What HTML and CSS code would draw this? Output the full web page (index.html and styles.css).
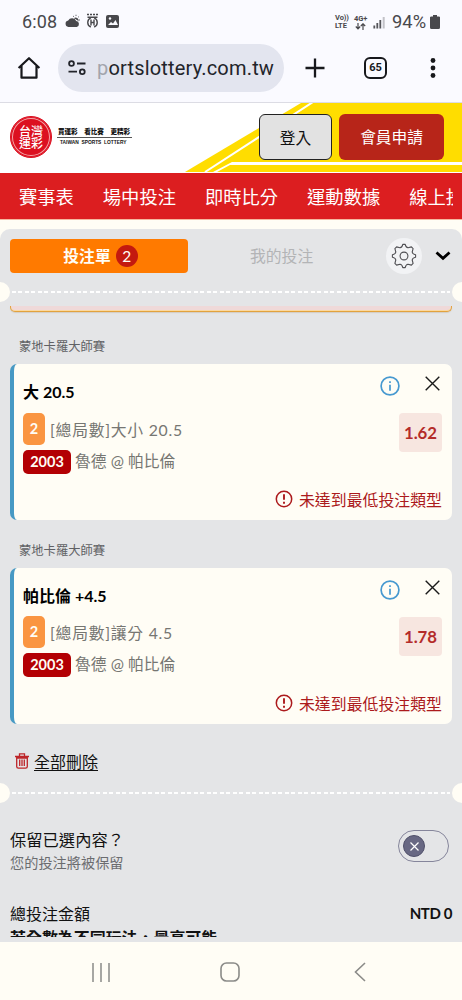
FILE: index.html
```html
<!DOCTYPE html>
<html lang="zh-Hant">
<head>
<meta charset="utf-8">
<title>台灣運彩</title>
<link rel="stylesheet" href="styles.css">
</head>
<body>
<div class="screen">
  <div class="status">
    <span class="time">6:08</span>
    <svg class="st-icons" width="58" height="18" viewBox="0 0 58 18">
      <g fill="#48484c">
        <path d="M3.400 14a3.300 3.300 0 0 1-.2-6.500 4.400 4.400 0 0 1 8 .6 3 3 0 0 1 .5 5.900z"/>
        <path d="M8.800 5.200a3 3 0 0 1 4.700 3.200 4.500 4.500 0 0 0-1.700-1.300 5.200 5.200 0 0 0-3-1.900z"/>
      </g>
      <path d="M8 3l.8.6M11 1.800v1M14 3.500l-.7.600M14.800 7h-.8" stroke="#48484c" fill="none"/>
      <g fill="none" stroke="#48484c" stroke-width="1.400">
        <path d="M22 1.500h11" stroke-dasharray="2 1"/>
        <path d="M25.800 4.800a5 5 0 0 0 0 9.200M29.200 4.800a5 5 0 0 1 0 9.200M26 6.500v6M29 6.500v6M26 9.500h3M22.500 4.300h10"/>
      </g>
      <rect x="41" y="2" width="13" height="13" rx="2" fill="#48484c"/>
      <path d="M43 12l3-3 2 1.500 2.500-3.500 2.500 5z" fill="#fafaff"/><circle cx="45" cy="5.500" r="1.200" fill="#fafaff"/>
    </svg>
    <span class="grow"></span>
    <span class="net">Vo))<br>LTE</span>
    <span class="net net-4g">4G+<svg width="11" height="7" viewBox="0 0 11 7"><path d="M3 0v5.500M.8 3.500L3 5.800l2.200-2.300M8 7V1M5.800 3L8 .8 10.200 3" fill="none" stroke="#48484c" stroke-width="1.200"/></svg></span>
    <svg class="signal" width="13" height="13" viewBox="0 0 13 13"><path d="M1.300 12.500v-3M4.300 12.500V7M7.300 12.500V4" stroke="#55555a" stroke-width="1.800"/><path d="M10.700 12.500V1" stroke="#c2c2c8" stroke-width="2"/></svg>
    <span class="batt-text">94%</span>
    <svg class="batt" width="10" height="14" viewBox="0 0 10 14"><path d="M3 0h4v1.500h1.500A1.300 1.300 0 0 1 10 3v9.500A1.500 1.500 0 0 1 8.500 14h-7A1.500 1.500 0 0 1 0 12.500V3a1.300 1.300 0 0 1 1.300-1.500H3z" fill="#48484c"/></svg>
  </div>
  <div class="browser">
    <svg class="home" width="24" height="24" viewBox="0 0 24 24"><path d="M1.600 12L12 2.200 22.400 12M4.500 10v11.700h15V10" fill="none" stroke="#17181c" stroke-width="2.200" stroke-linejoin="round"/></svg>
    <div class="url">
      <svg width="20" height="18" viewBox="0 0 20 18"><g fill="none" stroke="#22242a" stroke-width="1.800"><circle cx="4.500" cy="4.500" r="2.400"/><path d="M10 4.500h8.500M1.500 12.700H10"/><circle cx="15.300" cy="12.700" r="2.400"/></g></svg>
      <span class="address"><span class="faded">p</span>ortslottery.com.tw</span>
    </div>
    <svg class="plus" width="20" height="20" viewBox="0 0 20 20"><path d="M10 .5v19M.5 10h19" stroke="#17181c" stroke-width="2.300"/></svg>
    <span class="tabs">65</span>
    <svg class="dots" width="6" height="20" viewBox="0 0 6 20"><g fill="#17181c"><circle cx="3" cy="2.500" r="2.400"/><circle cx="3" cy="10" r="2.400"/><circle cx="3" cy="17.500" r="2.400"/></g></svg>
  </div>
  <header class="site">
    <svg class="swoosh" width="277" height="69" viewBox="0 0 277 69"><path d="M0 69L116 0H277V69z" fill="#fd0"/><path d="M20 69L128 -1" stroke="#fff" stroke-width="2"/><path d="M28 69L47 59H277V62H45L32 69z" fill="#fff"/></svg>
    <div class="logo">
      <span class="seal"><span>台灣</span><span>運彩</span></span>
      <span class="tag-lines"><b>買運彩　看比賽　更精彩</b><small>TAIWAN&nbsp; SPORTS&nbsp; LOTTERY</small></span>
    </div>
    <button class="login">登入</button>
    <button class="join">會員申請</button>
  </header>
  <nav class="menu"><div class="menu-clip"><span>賽事表</span><span>場中投注</span><span>即時比分</span><span>運動數據</span><span>線上投注</span></div></nav>
  <main class="slip">
    <div class="slip-tabs">
      <span class="tab-on">投注單<i>2</i></span>
      <span class="tab-off">我的投注</span>
      <span class="gear"><svg width="26" height="26" viewBox="-13 -13 26 26"><g fill="none" stroke="#505054" stroke-width="1.100" stroke-linejoin="round"><path d="M-1.200-11.600H1.200Q1.800-8.500 4-8.200 5.500-8.600 7.400-9.100L9.100-7.400Q8.600-5.500 8.200-4 8.500-1.800 11.600-1.200V1.200Q8.500 1.800 8.200 4 8.600 5.500 9.100 7.400L7.400 9.100Q5.500 8.600 4 8.200 1.800 8.500 1.200 11.600H-1.200Q-1.800 8.500-4 8.200-5.500 8.600-7.400 9.100L-9.100 7.400Q-8.600 5.500-8.200 4-8.500 1.800-11.600 1.200V-1.200Q-8.500-1.800-8.200-4-8.600-5.500-9.100-7.400L-7.400-9.100Q-5.500-8.600-4-8.200-1.800-8.500-1.200-11.600z"/><circle r="3.900"/></g></svg></span>
      <svg class="chev" width="16" height="10" viewBox="0 0 16 10"><path d="M1.500 1.500L8 7.300l6.500-5.800" fill="none" stroke="#000" stroke-width="2.800"/></svg>
    </div>
    <div class="tear"><span></span></div>
    <div class="prev-card"></div>
    <div class="league">蒙地卡羅大師賽</div>
    <section class="card">
      <div class="pick">
        <h3>大 20.5</h3>
        <p class="market"><b>2</b><span>[總局數]大小 20.5</span></p>
        <p class="match"><b>2003</b><span>魯德 @ 帕比倫</span></p>
      </div>
      <div class="side">
        <div class="actions">
          <svg class="info" width="20" height="20" viewBox="0 0 20 20"><circle cx="10" cy="10" r="8.900" fill="none" stroke="#4799d0" stroke-width="1.700"/><path d="M10 8.700v6M10 5.300v1.700" stroke="#4799d0" stroke-width="1.700"/></svg>
          <svg class="close" width="15" height="15" viewBox="0 0 15 15"><path d="M.7.700l13.600 13.600M14.300.7L.7 14.300" stroke="#1a1a1a" stroke-width="1.400"/></svg>
        </div>
        <span class="odds">1.62</span>
      </div>
      <div class="warn"><svg width="18" height="18" viewBox="0 0 18 18"><circle cx="9" cy="9" r="7.700" fill="none" stroke="#ac1a1c" stroke-width="1.500"/><path d="M9 4.200v5.600M9 11.700v2" stroke="#ac1a1c" stroke-width="1.900"/></svg><span>未達到最低投注類型</span></div>
    </section>
    <div class="league">蒙地卡羅大師賽</div>
    <section class="card card-second">
      <div class="pick">
        <h3>帕比倫 +4.5</h3>
        <p class="market"><b>2</b><span>[總局數]讓分 4.5</span></p>
        <p class="match"><b>2003</b><span>魯德 @ 帕比倫</span></p>
      </div>
      <div class="side">
        <div class="actions">
          <svg class="info" width="20" height="20" viewBox="0 0 20 20"><circle cx="10" cy="10" r="8.900" fill="none" stroke="#4799d0" stroke-width="1.700"/><path d="M10 8.700v6M10 5.300v1.700" stroke="#4799d0" stroke-width="1.700"/></svg>
          <svg class="close" width="15" height="15" viewBox="0 0 15 15"><path d="M.7.700l13.600 13.600M14.300.7L.7 14.300" stroke="#1a1a1a" stroke-width="1.400"/></svg>
        </div>
        <span class="odds">1.78</span>
      </div>
      <div class="warn"><svg width="18" height="18" viewBox="0 0 18 18"><circle cx="9" cy="9" r="7.700" fill="none" stroke="#ac1a1c" stroke-width="1.500"/><path d="M9 4.200v5.600M9 11.700v2" stroke="#ac1a1c" stroke-width="1.900"/></svg><span>未達到最低投注類型</span></div>
    </section>
    <div class="clear"><svg width="14" height="16" viewBox="0 0 14 16"><g fill="none" stroke="#bd2429" stroke-width="1.300"><path d="M0 3.500h14M4.500 3V.8h5V3M1.700 5v8.500a1.700 1.700 0 0 0 1.700 1.700h7.200a1.700 1.700 0 0 0 1.700-1.700V5zM4.700 6.500v6.500M7 6.500v6.500M9.300 6.500v6.500"/></g></svg><a>全部刪除</a></div>
    <div class="tear tear-low"><span></span></div>
    <div class="keep">
      <div><div class="keep-title">保留已選內容？</div><div class="keep-sub">您的投注將被保留</div></div>
      <span class="switch"><span class="knob"><svg width="9" height="9" viewBox="0 0 9 9"><path d="M.5.500l8 8M8.500.500l-8 8" stroke="#fff" stroke-width="1.200"/></svg></span></span>
    </div>
    <div class="total"><span>總投注金額</span><b>NTD 0</b></div>
    <div class="more">若全數為不同玩法，最高可能</div>
  </main>
  <div class="navbar">
    <svg width="18" height="19" viewBox="0 0 18 19"><path d="M1 0v19M9 0v19M17 0v19" stroke="#8b8b88" stroke-width="1.500"/></svg>
    <svg class="nav-home" width="20" height="20" viewBox="0 0 20 20"><rect x="1" y="1" width="18" height="18" rx="5.500" fill="none" stroke="#8b8b88" stroke-width="1.600"/></svg>
    <svg width="12" height="20" viewBox="0 0 12 20"><path d="M11 1L1.500 10 11 19" fill="none" stroke="#8b8b88" stroke-width="1.600"/></svg>
  </div>
</div>
</body>
</html>
```
FILE: styles.css
```css
* { box-sizing: border-box; }
body, h3, p { margin: 0; }
svg { display: block; flex: none; }
b, i { font-style: normal; }
.screen {
  width: 462px; height: 1000px; overflow: hidden;
  display: flex; flex-direction: column;
  background: #fffdf5;
  font-family: Lato, "Noto Sans CJK TC", sans-serif;
  white-space: nowrap;
}
.grow { flex: 1; }

.status {
  height: 44px; flex: none; background: #fafaff; color: #48484c;
  display: flex; align-items: center; padding: 0 22px 0 22px;
  font: 18px/44px Roboto, sans-serif;
}
.time { width: 43px; letter-spacing: .1px; }
.net { font: bold 7.500px/8px Roboto, sans-serif; width: 14px; letter-spacing: -.1px; }
.net-4g { margin-left: 5px; width: 14px; }
.net-4g svg { margin-left: 1px; }
.signal { margin: 0 6px 0 5px; }
.batt-text { width: 38px; font-size: 18.300px; letter-spacing: .1px; }

.browser {
  height: 59px; flex: none; background: #fafaff; border-bottom: 1px solid #dcdce4;
  display: flex; align-items: flex-start; padding-left: 17px;
}
.home { margin-top: 12px; }
.url {
  margin-left: 17px; width: 226px; height: 48px; border-radius: 24px; background: #e3e5ef;
  display: flex; align-items: center; padding-left: 9px;
}
.address { margin-left: 10px; font: 20px/49px Roboto, sans-serif; letter-spacing: .18px; color: #22242a; }
.faded { color: #a2a4ac; }
.plus { margin: 14px 0 0 21px; }
.tabs {
  margin: 13px 0 0 39px; width: 23px; height: 22px; border: 2px solid #17181c; border-radius: 6px;
  font: bold 11px/18px Roboto, sans-serif; text-align: center; color: #17181c;
}
.dots { margin: 14px 0 0 43px; }

.site { position: relative; height: 70px; flex: none; background: #fff; display: flex; padding-left: 10px; }
.swoosh { position: absolute; right: 0; top: 0; }
.logo { display: flex; width: 249px; padding-top: 13px; }
.seal {
  width: 42px; height: 42px; border-radius: 50%; background: #dc1020;
  border: 1px solid #dc1020; box-shadow: inset 0 0 0 1px #dc1020, inset 0 0 0 2px #f5a5a8;
  display: flex; flex-direction: column; align-items: center; justify-content: center;
  color: #fff; font: 500 12px/12.500px "Noto Sans CJK TC", sans-serif;
}
.tag-lines { margin-left: 5px; width: 75px; color: #111; }
.tag-lines b { display: block; font: 900 6.550px/10px "Noto Sans CJK TC", sans-serif; padding: 10px 0 1px 1px; border-bottom: 1px solid #555; }
.tag-lines small { display: block; font: bold 4.850px/9px "Liberation Sans", sans-serif; padding-left: 3px; }
.site button {
  position: relative; margin-top: 11px; height: 46px; border-radius: 6px; padding: 0;
  font: 15.700px/46px Lato, "Noto Sans CJK TC", sans-serif;
}
.login { width: 73px; background: #e2e2e2; border: 1px solid #222; color: #111; }
.site .join { width: 105px; margin-left: 7px; background: #b72519; border: 0; color: #fff; }

.menu { height: 47px; flex: none; background: #dc1e20; border-bottom: 1px solid #f5b8a0; padding: 0 9px 0 19px; }
.menu-clip { display: flex; gap: 29px; overflow: hidden; color: #fff; font-size: 18.300px; line-height: 49px; height: 46px; }

.slip {
  margin-top: 9px; height: 713px; flex: none; overflow: hidden; background: #e4e5e7;
  border-radius: 10px 10px 0 0;
}
.slip-tabs { height: 53px; display: flex; align-items: center; padding-left: 10px; }
.tab-on {
  width: 178px; height: 34px; border-radius: 4px; background: #ff7a00; color: #fffdf5;
  display: flex; align-items: center; justify-content: center; font-size: 15.800px; font-weight: bold; padding-left: 3px;
}
.tab-on i {
  width: 22px; height: 22px; margin-left: 5px; border-radius: 50%; background: #c4190f;
  text-align: center; font: 15.500px/22px Lato, sans-serif;
}
.tab-off { margin-left: 62px; width: 136px; font-size: 15.800px; color: #b3b4b6; }
.gear { width: 36px; height: 36px; border-radius: 50%; background: #f2f3f5; display: grid; place-items: center; }
.chev { margin: 1px 0 0 13px; }
.tear { display: flex; align-items: center; justify-content: space-between; height: 20px; margin: 0 -10px; }
.tear::before, .tear::after { content: ""; width: 20px; height: 20px; border-radius: 50%; background: #fffdf5; }
.tear span { flex: 1; margin: 0 2px; height: 2px; background: repeating-linear-gradient(90deg, #fff 0 4px, transparent 4px 6.500px); }
.prev-card {
  height: 6px; margin: 4px 10px 0; background: #efd9d9; border: 1px solid #e2a23e; border-top: 0; border-radius: 0 0 5px 5px;
  box-shadow: inset 0 -1px 0 #fbd9a0, 0 1px 1px #d3cdc4;
}
.league { height: 48px; line-height: 62px; font-size: 12.300px; padding-left: 19px; color: #606164; }
.prev-card + .league { height: 52px; line-height: 70px; }
.card {
  height: 156px; margin: 0 10px; background: #fffdf5; border-left: 4px solid #4799c4; border-radius: 7px;
  display: grid; grid-template-columns: 1fr auto; grid-template-rows: 123px 24px; padding: 0 10px 0 9px;
}
.pick h3 { font-size: 16px; line-height: 30px; padding-top: 13px; height: 49px; }
.pick p { display: flex; align-items: center; color: #767672; font-size: 15.800px; }
.market { height: 32px; }
.market b { width: 22px; height: 32px; margin-right: 5px; background: #fa9541; border-radius: 5px; color: #fffdf5; font: bold 14.500px/32px Lato, sans-serif; text-align: center; }
.market span { letter-spacing: .75px; }
.match { margin-top: 5px; height: 24px; line-height: 22px; }
.match b { width: 48px; height: 24px; margin-right: 4px; background: #b30004; border-radius: 5px; color: #fffdf5; font: bold 14.500px/24px Lato, sans-serif; text-align: center; }
.match span { height: 24px; }
.card-second h3 { height: 48px; }
.side { display: flex; flex-direction: column; align-items: flex-end; }
.actions { display: flex; gap: 25px; height: 49px; padding: 12px 2px 0 0; }
.odds { width: 43px; height: 39px; border-radius: 4px; background: #f7e6e0; color: #b42c2a; font: bold 16.800px/39px Lato, sans-serif; text-align: center; }
.warn { grid-column: 1 / 3; display: flex; align-items: center; justify-content: flex-end; gap: 6px; color: #ac1a1c; font-size: 15.900px; }
.clear { height: 59px; padding: 14px 0 0 15px; display: flex; align-items: center; gap: 5px; font-size: 16px; color: #111; }
.clear a { text-decoration: underline; text-underline-offset: 2px; text-decoration-thickness: 1px; }
.keep { height: 94px; display: flex; justify-content: space-between; padding: 25px 13px 0 10px; }
.keep-title { font-size: 16.300px; line-height: 24px; color: #111; }
.keep-sub { font-size: 14.200px; line-height: 21px; color: #6b6c6f; }
.switch { width: 51px; height: 32px; margin-top: 2px; border: 1px solid #85859b; border-radius: 16px; padding: 4px; }
.knob { width: 22px; height: 22px; border-radius: 50%; background: #686883; display: grid; place-items: center; border: 1px solid #50506a; }
.total { display: flex; justify-content: space-between; align-items: center; height: 31px; padding: 0 10px; font-size: 16px; color: #111; }
.total b { font-size: 15px; letter-spacing: -.4px; line-height: 24px; }
.more { height: 9px; overflow: hidden; padding-left: 10px; font-size: 15.950px; font-weight: bold; line-height: 19px; color: #111; }

.navbar { height: 58px; display: flex; align-items: center; justify-content: space-between; padding: 2px 96px 0 92px; }
.nav-home { margin-right: 4px; }
```
